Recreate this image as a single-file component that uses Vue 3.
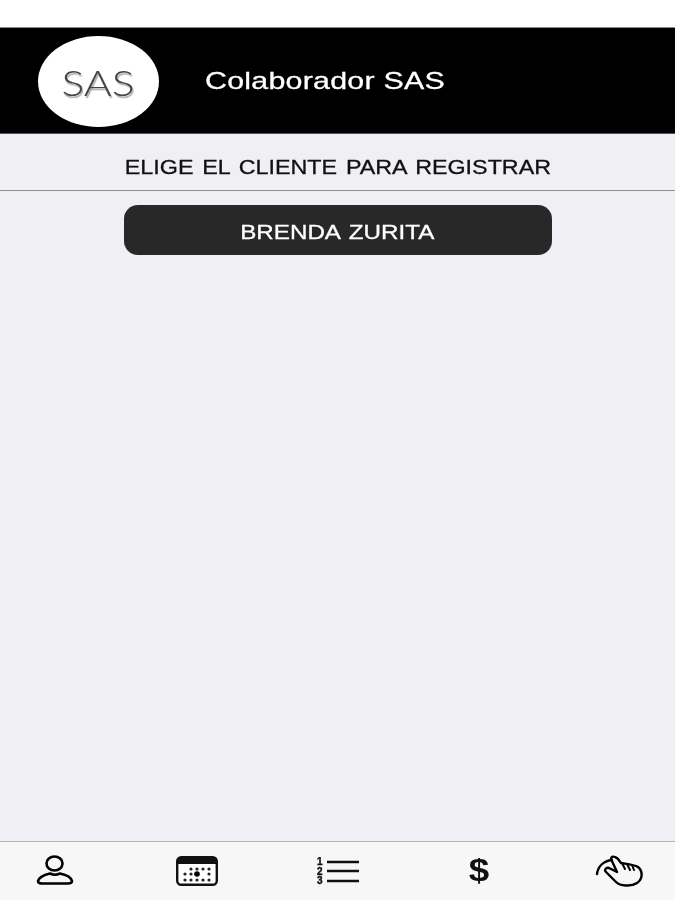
<script setup>
const calendarDots = [
  [7, 18], [7, 24], [13, 18], [13, 24], [19, 13], [19, 24],
  [25, 13], [25, 24], [31, 13], [31, 18], [31, 24], [13, 13],
]
</script>

<template>
  <div class="page">
    <div class="status"></div>

    <header class="header">
      <div class="logo"><span class="logo-text">SAS</span></div>
      <span class="title">Colaborador SAS</span>
    </header>

    <div class="subtitle"><span class="subtitle-text">ELIGE EL CLIENTE PARA REGISTRAR</span></div>

    <main class="content">
      <button class="client"><span class="client-text">BRENDA ZURITA</span></button>
    </main>

    <nav class="tabs">
      <div class="tab">
        <svg width="40" height="32" viewBox="0 0 40 32">
          <ellipse cx="18.5" cy="8.5" rx="8" ry="7" fill="none" stroke="#000" stroke-width="2.6" />
          <path d="M2 26 C3 22 10 19.5 14 18.5 C17 20 21 20 24 18.5 C29 19.5 35 22 36 26 C36 28 34 28.5 32 28.5 L6 28.5 C4 28.5 2 28 2 26 Z" fill="none" stroke="#000" stroke-width="2.6" stroke-linejoin="round" />
        </svg>
      </div>
      <div class="tab">
        <svg width="42" height="30" viewBox="0 0 42 30">
          <rect x="1.2" y="1.2" width="39.6" height="27.6" rx="4" fill="#fff" stroke="#111" stroke-width="2.4" />
          <path d="M1 8 V5 Q1 1 5 1 H37 Q41 1 41 5 V8 Z" fill="#111" />
          <circle v-for="(d, i) in calendarDots" :key="i" :cx="d[0] + 2" :cy="d[1]" r="1.6" fill="#222" />
          <circle cx="21" cy="18" r="2.8" fill="#000" />
        </svg>
      </div>
      <div class="tab">
        <svg width="44" height="28" viewBox="0 0 44 28">
          <text class="num" x="1" y="8">1</text>
          <text class="num" x="1" y="17.5">2</text>
          <text class="num" x="1" y="27">3</text>
          <path d="M11 5 H43 M11 14 H43 M11 24 H43" stroke="#111" stroke-width="2.3" />
        </svg>
      </div>
      <div class="tab"><span class="dollar">$</span></div>
      <div class="tab">
        <svg width="50" height="32" viewBox="0 0 50 32">
          <path d="M2 19 C3 11 9 6 17 5" fill="none" stroke="#000" stroke-width="2.4" stroke-linecap="round" />
          <path d="M20 2 C18 1 16 2 16 4 L22 17 L14 13 C11 12 9 15 11 17 L21 27 C25 31 36 32 42 28 C48 24 48 16 43 12 C39 9.5 32 9 26 8 L23 4 C22.5 3 21 2.5 20 2 Z" fill="none" stroke="#000" stroke-width="2.4" stroke-linejoin="round" />
          <path d="M27 8 L30 14 M32 9 L35 15 M37 10 L39 15" fill="none" stroke="#000" stroke-width="2" stroke-linecap="round" />
        </svg>
      </div>
    </nav>
  </div>
</template>

<style scoped>
.page {
  width: 675px;
  height: 900px;
  display: flex;
  flex-direction: column;
  background: #efeff4;
  font-family: "Liberation Sans", Arial, sans-serif;
  overflow: hidden;
  filter: blur(0.5px);
}

.status {
  height: 28px;
  box-sizing: border-box;
  background: #fff;
  border-bottom: 1px solid #8c8c8c;
}

.header {
  height: 106px;
  background: #000;
  display: flex;
  align-items: center;
  padding-left: 38px;
  padding-top: 2px;
  box-sizing: border-box;
  border-bottom: 1px solid #555;
}

.logo {
  width: 121px;
  height: 91px;
  border-radius: 50%;
  background: #fff;
  display: flex;
  align-items: center;
  justify-content: center;
  flex-shrink: 0;
}

.logo-text {
  font-family: Lato, "Liberation Sans", sans-serif;
  font-weight: 300;
  font-size: 35px;
  color: #444;
  text-shadow: 1px 2px 1px #aaa;
  transform: scaleX(1.22);
}

.title {
  margin-left: 46px;
  margin-top: -2px;
  color: #fff;
  font-size: 24px;
  white-space: nowrap;
  transform: scaleX(1.265);
  transform-origin: left center;
  letter-spacing: 0.2px;
  -webkit-text-stroke: 0.3px #fff;
}

.subtitle {
  height: 57px;
  box-sizing: border-box;
  border-bottom: 1px solid #8e8e93;
  display: flex;
  align-items: center;
  justify-content: center;
  padding-top: 11px;
}

.subtitle-text {
  font-size: 20px;
  color: #111;
  white-space: nowrap;
  word-spacing: 2px;
  transform: scaleX(1.165);
  -webkit-text-stroke: 0.3px #111;
}

.content {
  flex: 1;
  display: flex;
  flex-direction: column;
  align-items: center;
  padding-top: 14px;
}

.client {
  width: 428px;
  height: 50px;
  border: none;
  border-radius: 14px;
  background: #282828;
  color: #fff;
  font-family: inherit;
  font-size: 20px;
  display: flex;
  align-items: center;
  justify-content: center;
  padding: 4px 0 0;
}

.client-text {
  white-space: nowrap;
  word-spacing: 2px;
  transform: scaleX(1.21);
  -webkit-text-stroke: 0.3px #fff;
}

.tabs {
  height: 59px;
  box-sizing: border-box;
  background: #f7f7f7;
  border-top: 1px solid #b5b5b5;
  display: grid;
  grid-template-columns: repeat(5, 141px);
  justify-content: center;
}

.tab {
  display: flex;
  align-items: center;
  justify-content: center;
}

.num {
  font-size: 10px;
  font-weight: 700;
  fill: #111;
  stroke: #111;
  stroke-width: 0.4px;
}

.dollar {
  font-size: 32px;
  font-weight: 700;
  color: #111;
  line-height: 1;
  margin-top: -2px;
  transform: scaleX(1.15);
}
</style>
